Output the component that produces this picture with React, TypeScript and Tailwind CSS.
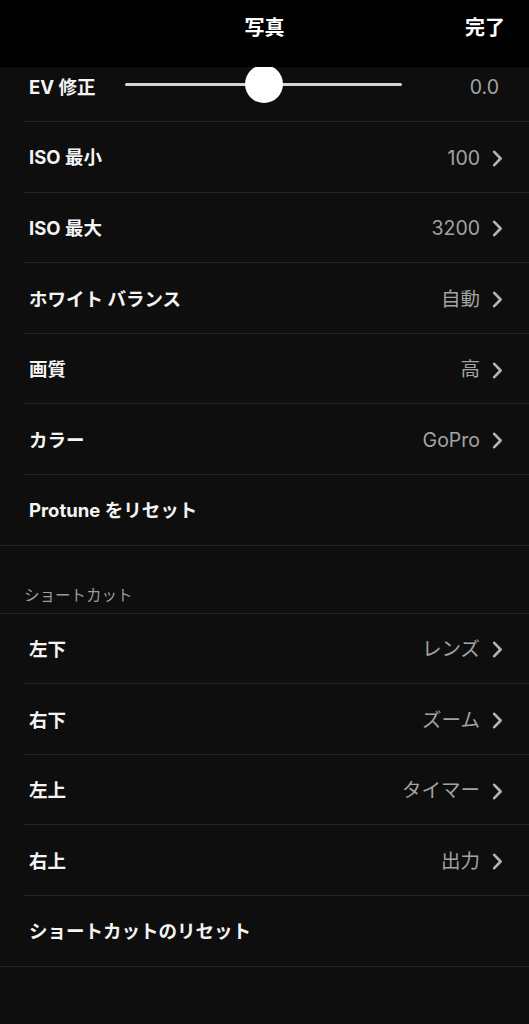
const protune = [
  { label: "ISO 最小", value: "100" },
  { label: "ISO 最大", value: "3200" },
  { label: "ホワイト バランス", value: "自動" },
  { label: "画質", value: "高" },
  { label: "カラー", value: "GoPro" },
];

const shortcuts = [
  { label: "左下", value: "レンズ" },
  { label: "右下", value: "ズーム" },
  { label: "左上", value: "タイマー" },
  { label: "右上", value: "出力" },
];

const Chevron = () => (
  <svg width="11" height="17" viewBox="0 0 11 17" fill="none" className="text-[#b4b4b4]">
    <path d="M2.2 1.8 L8.6 8.5 L2.2 15.2" stroke="currentColor" strokeWidth="2.6" strokeLinecap="round" strokeLinejoin="round" />
  </svg>
);

type RowProps = {
  label: string;
  value?: string;
  full?: boolean;
};

const Row = ({ label, value, full }: RowProps) => {
  return (
    <div
      className={`flex h-[70.6px] items-center justify-between border-b border-[#242424] pr-[26px] pt-[3px] ${
        full ? "pl-[29px]" : "ml-[23px] pl-[6px]"
      }`}
    >
      <span className="text-[18.5px] font-bold text-[#f4f4f4]">{label}</span>
      {value && (
        <div className="flex items-center gap-[12px]">
          <span className="text-[19.5px] text-[#a3a3a3]">{value}</span>
          <Chevron />
        </div>
      )}
    </div>
  );
};

const App = () => {
  return (
    <div
      className="min-h-[1024px] w-full bg-[#0e0e0e]"
      style={{ fontFamily: 'Inter, "Noto Sans CJK JP", sans-serif' }}
    >
      {/* Header */}
      <div className="grid h-[67px] grid-cols-[1fr_auto_1fr] items-start bg-black pt-[13px]">
        <div />
        <span className="text-[20px] font-bold leading-[30px] text-white">写真</span>
        <span className="justify-self-end pr-[24px] text-[20px] font-bold leading-[30px] text-white">
          完了
        </span>
      </div>

      {/* EV slider */}
      <div className="ml-[23px] h-[55px] overflow-hidden border-b border-[#242424] pl-[6px]">
        <div className="flex h-[42px] items-center">
          <span className="w-[96px] text-[18.5px] font-bold text-[#f4f4f4]">EV 修正</span>
          <div className="relative flex-1 -translate-y-[4px]">
            <div className="h-[3px] rounded-full bg-[#d4d4d4]" />
            <div className="absolute left-1/2 top-1/2 h-[38px] w-[38px] -translate-x-1/2 -translate-y-1/2 rounded-full bg-white" />
          </div>
          <span className="w-[127px] pr-[30px] text-right text-[19.5px] text-[#a3a3a3]">0.0</span>
        </div>
      </div>

      {protune.map((item) => (
        <Row key={item.label} label={item.label} value={item.value} />
      ))}
      <Row label="Protune をリセット" full />

      {/* Shortcut section */}
      <div className="flex h-[68px] items-end border-b border-[#242424] pb-[7px] pl-[24px]">
        <span className="text-[15.5px] leading-[20px] text-[#9c9c9c]">ショートカット</span>
      </div>
      {shortcuts.map((item) => (
        <Row key={item.label} label={item.label} value={item.value} />
      ))}
      <Row label="ショートカットのリセット" full />
    </div>
  );
};

export default App;
